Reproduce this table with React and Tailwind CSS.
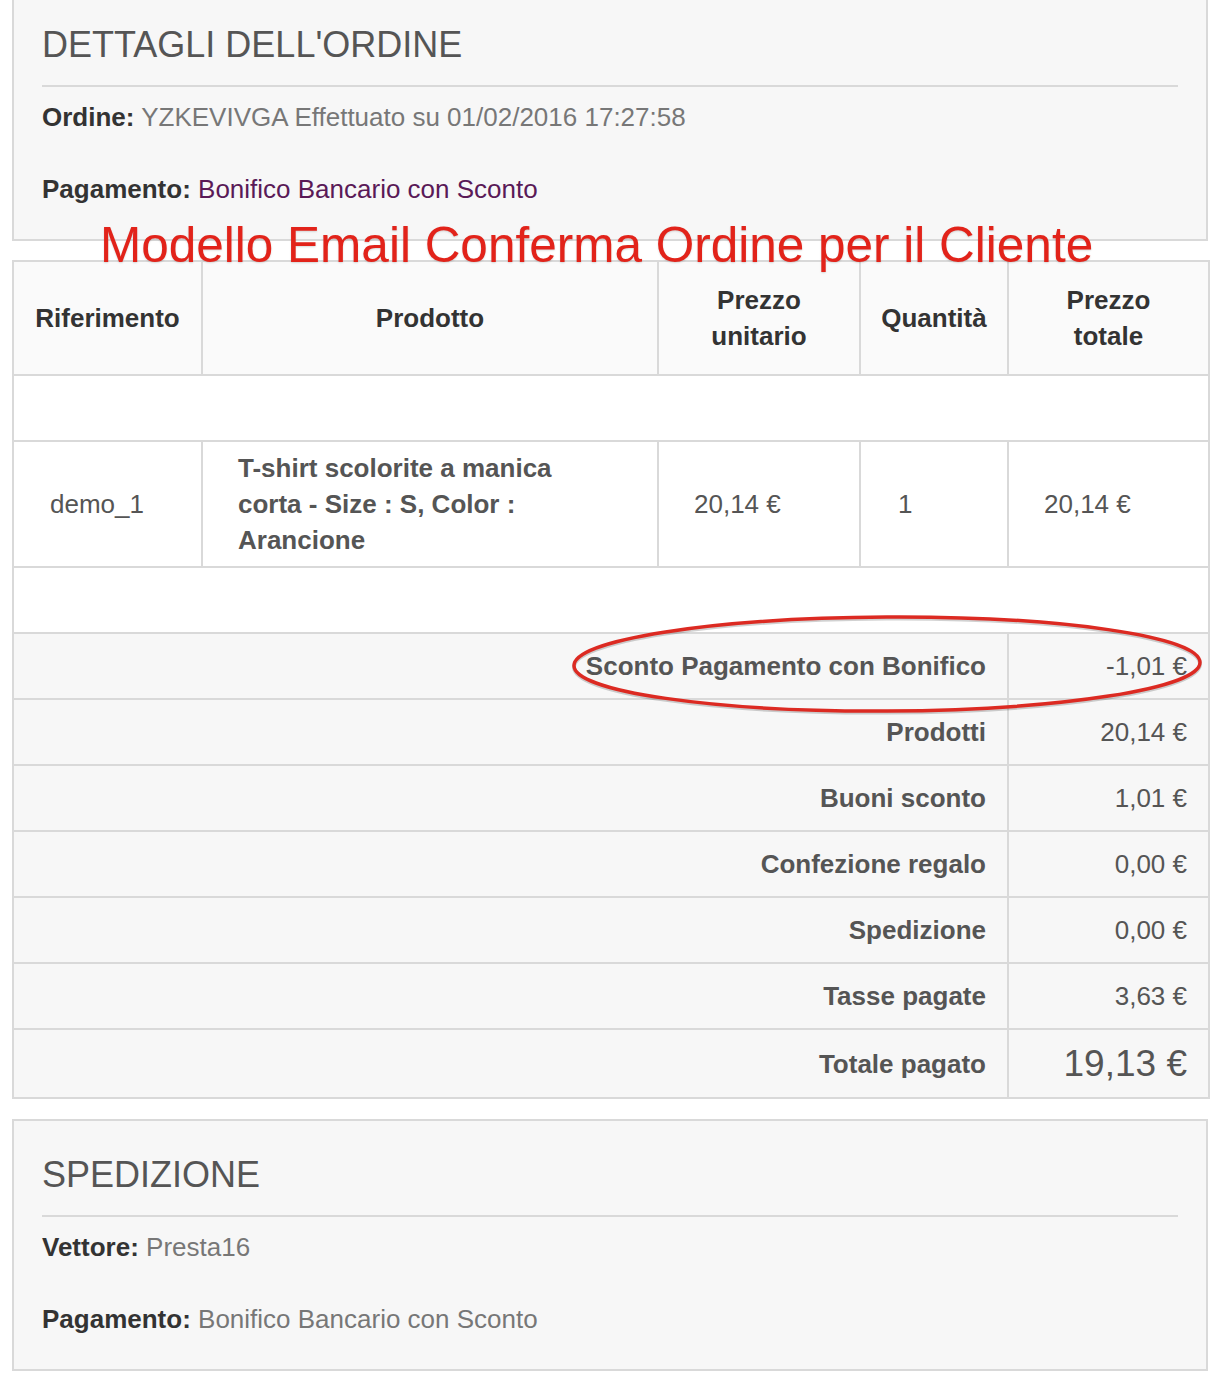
import React from "react";

const summary = [
  { label: "Sconto Pagamento con Bonifico", value: "-1,01 €" },
  { label: "Prodotti", value: "20,14 €" },
  { label: "Buoni sconto", value: "1,01 €" },
  { label: "Confezione regalo", value: "0,00 €" },
  { label: "Spedizione", value: "0,00 €" },
  { label: "Tasse pagate", value: "3,63 €" },
];

function InfoBox({ title, children, noTop }) {
  return (
    <div
      className={`bg-[#f7f7f7] border-2 border-[#d9d9d9] px-[28px] pb-[32px] ${
        noTop ? "border-t-0 pt-[25px]" : "pt-[34px]"
      }`}
    >
      <h2 className="text-[36px] leading-[40px] text-[#555] font-normal">{title}</h2>
      <div className="h-[2px] bg-[#d9d9d9] mt-[20px] mb-[12px]" />
      {children}
    </div>
  );
}

export default function App() {
  return (
    <div
      className="relative bg-white w-[1232px] h-[1390px] overflow-hidden pl-[12px] pr-[24px]"
      style={{ fontFamily: '"Liberation Sans", Arial, Helvetica, sans-serif' }}
    >
      {/* Dettagli */}
      <InfoBox title="DETTAGLI DELL'ORDINE" noTop>
        <p className="text-[26px] leading-[36px] mb-[36px] text-[#777]">
          <span className="font-bold text-[#333]">Ordine:</span> YZKEVIVGA Effettuato su 01/02/2016 17:27:58
        </p>
        <p className="text-[26px] leading-[36px] text-[#5a1a57]">
          <span className="font-bold text-[#333]">Pagamento:</span> Bonifico Bancario con Sconto
        </p>
      </InfoBox>

      {/* Tabella prodotti */}
      <table className="mt-[19px] w-[1196px] table-fixed border-collapse border-2 border-[#d9d9d9] text-[26px] leading-[36px] text-[#555]">
        <colgroup>
          <col className="w-[189px]" />
          <col className="w-[456px]" />
          <col className="w-[202px]" />
          <col className="w-[148px]" />
          <col className="w-[201px]" />
        </colgroup>
        <thead>
          <tr className="bg-[#fafafa] h-[114px]">
            <th className="border-2 border-[#d9d9d9] font-bold text-[#333] text-center">Riferimento</th>
            <th className="border-2 border-[#d9d9d9] font-bold text-[#333] text-center">Prodotto</th>
            <th className="border-2 border-[#d9d9d9] font-bold text-[#333] text-center">
              Prezzo
              <br />
              unitario
            </th>
            <th className="border-2 border-[#d9d9d9] font-bold text-[#333] text-center">Quantità</th>
            <th className="border-2 border-[#d9d9d9] font-bold text-[#333] text-center">
              Prezzo
              <br />
              totale
            </th>
          </tr>
        </thead>
        <tbody>
          <tr className="h-[66px] bg-white">
            <td colSpan={5} className="border-2 border-[#d9d9d9]" />
          </tr>
          <tr className="h-[126px] bg-white">
            <td className="border-2 border-[#d9d9d9] pl-[36px]">demo_1</td>
            <td className="border-2 border-[#d9d9d9] pl-[35px] pr-[60px] font-bold">
              T-shirt scolorite a manica corta - Size : S, Color : Arancione
            </td>
            <td className="border-2 border-[#d9d9d9] pl-[35px]">20,14 €</td>
            <td className="border-2 border-[#d9d9d9] pl-[37px]">1</td>
            <td className="border-2 border-[#d9d9d9] pl-[35px]">20,14 €</td>
          </tr>
          <tr className="h-[66px] bg-white">
            <td colSpan={5} className="border-2 border-[#d9d9d9]" />
          </tr>
          {summary.map((row) => (
            <tr key={row.label} className="h-[66px] bg-[#f7f7f7]">
              <td colSpan={4} className="border-2 border-[#d9d9d9] text-right pr-[21px] font-bold">
                {row.label}
              </td>
              <td className="border-2 border-[#d9d9d9] text-right pr-[21px]">{row.value}</td>
            </tr>
          ))}
          <tr className="h-[69px] bg-[#f7f7f7]">
            <td colSpan={4} className="border-2 border-[#d9d9d9] text-right pr-[21px] font-bold">
              Totale pagato
            </td>
            <td className="border-2 border-[#d9d9d9] text-right pr-[21px] text-[37px]">19,13 €</td>
          </tr>
        </tbody>
      </table>

      {/* Spedizione */}
      <div className="mt-[20px]">
        <InfoBox title="SPEDIZIONE">
          <p className="text-[26px] leading-[36px] mb-[36px] text-[#777]">
            <span className="font-bold text-[#333]">Vettore:</span> Presta16
          </p>
          <p className="text-[26px] leading-[36px] text-[#777]">
            <span className="font-bold text-[#333]">Pagamento:</span> Bonifico Bancario con Sconto
          </p>
        </InfoBox>
      </div>

      {/* Annotazioni */}
      <div className="absolute left-[100px] top-[220px] text-[49.5px] leading-[50px] text-[#e2231a] whitespace-nowrap [text-shadow:0_1px_2px_rgba(0,0,0,0.15)]">
        Modello Email Conferma Ordine per il Cliente
      </div>
      <svg
        className="absolute left-[568px] top-[610px]"
        width="640"
        height="108"
        viewBox="0 0 640 108"
        fill="none"
      >
        <ellipse
          cx="319"
          cy="54"
          rx="313"
          ry="47"
          stroke="rgba(0,0,0,0.18)"
          strokeWidth="4"
          transform="translate(0 1.5) rotate(-0.3 319 54)"
        />
        <ellipse
          cx="319"
          cy="54"
          rx="313"
          ry="47"
          stroke="#dc2a22"
          strokeWidth="3.5"
          transform="rotate(-0.3 319 54)"
        />
      </svg>
    </div>
  );
}
